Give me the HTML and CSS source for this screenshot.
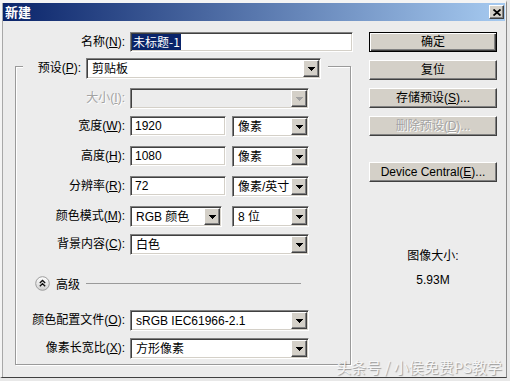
FILE: index.html
```html
<!DOCTYPE html>
<html lang="zh-CN">
  <head>
    <meta charset="UTF-8" />
    <title>新建</title>
    <link rel="stylesheet" href="styles.css">
  </head>
  <body>
    <div class="window">
      <div class="titlebar">
        <span class="title">新建</span>
        <span class="close">
          <svg width="8" height="7" viewBox="0 0 8 7"><path d="M0.5 0.5L7.5 6.5M7.5 0.5L0.5 6.5" stroke="#000" stroke-width="1.8"/></svg>
        </span>
      </div>

      <div class="content">
        <div class="form">
          <div class="row name-row">
            <span class="label">名称(<u>N</u>):</span>
            <div class="field w-name"><span class="sel">未标题-1</span></div>
          </div>

          <div class="group">
            <div class="row group-head">
              <span class="label">预设(<u>P</u>):</span>
              <div class="select w-preset"><span class="val">剪贴板</span><span class="arrow"><svg width="7" height="4" viewBox="0 0 7 4"><path d="M0 0h7v1h-1v1h-1v1h-1v1h-1v-1h-1v-1h-1v-1h-1z"/></svg></span></div>
            </div>

            <div class="row">
              <span class="label disabled">大小(<u>I</u>):</span>
              <div class="select w-full off"><span class="val"></span><span class="arrow"><svg width="7" height="4" viewBox="0 0 7 4"><path d="M0 0h7v1h-1v1h-1v1h-1v1h-1v-1h-1v-1h-1v-1h-1z"/></svg></span></div>
            </div>

            <div class="row tight">
              <span class="label">宽度(<u>W</u>):</span>
              <div class="field w-num">1920</div>
              <div class="select w-unit"><span class="val">像素</span><span class="arrow"><svg width="7" height="4" viewBox="0 0 7 4"><path d="M0 0h7v1h-1v1h-1v1h-1v1h-1v-1h-1v-1h-1v-1h-1z"/></svg></span></div>
            </div>

            <div class="row">
              <span class="label">高度(<u>H</u>):</span>
              <div class="field w-num">1080</div>
              <div class="select w-unit"><span class="val">像素</span><span class="arrow"><svg width="7" height="4" viewBox="0 0 7 4"><path d="M0 0h7v1h-1v1h-1v1h-1v1h-1v-1h-1v-1h-1v-1h-1z"/></svg></span></div>
            </div>

            <div class="row">
              <span class="label">分辨率(<u>R</u>):</span>
              <div class="field w-num">72</div>
              <div class="select w-unit"><span class="val">像素/英寸</span><span class="arrow"><svg width="7" height="4" viewBox="0 0 7 4"><path d="M0 0h7v1h-1v1h-1v1h-1v1h-1v-1h-1v-1h-1v-1h-1z"/></svg></span></div>
            </div>

            <div class="row">
              <span class="label">颜色模式(<u>M</u>):</span>
              <div class="select w-mode"><span class="val">RGB 颜色</span><span class="arrow"><svg width="7" height="4" viewBox="0 0 7 4"><path d="M0 0h7v1h-1v1h-1v1h-1v1h-1v-1h-1v-1h-1v-1h-1z"/></svg></span></div>
              <div class="select w-unit"><span class="val">8 位</span><span class="arrow"><svg width="7" height="4" viewBox="0 0 7 4"><path d="M0 0h7v1h-1v1h-1v1h-1v1h-1v-1h-1v-1h-1v-1h-1z"/></svg></span></div>
            </div>

            <div class="row tight">
              <span class="label">背景内容(<u>C</u>):</span>
              <div class="select w-full"><span class="val">白色</span><span class="arrow"><svg width="7" height="4" viewBox="0 0 7 4"><path d="M0 0h7v1h-1v1h-1v1h-1v1h-1v-1h-1v-1h-1v-1h-1z"/></svg></span></div>
            </div>

            <div class="advanced">
              <svg class="adv-icon" width="15" height="15" viewBox="0 0 15 15">
                <defs>
                  <linearGradient id="knob" x1="0" y1="0" x2="0" y2="1">
                    <stop offset="0" stop-color="#ffffff"/>
                    <stop offset="1" stop-color="#cfcfcf"/>
                  </linearGradient>
                </defs>
                <circle cx="7.5" cy="7.5" r="6.8" fill="url(#knob)" stroke="#9c9c9c"/>
                <path d="M4.8 7L7.5 4.5L10.2 7M4.8 10.2L7.5 7.7L10.2 10.2" fill="none" stroke="#111" stroke-width="1.3"/>
              </svg>
              <span class="adv-text">高级</span>
              <span class="adv-line"></span>
            </div>

            <div class="row after-adv">
              <span class="label">颜色配置文件(<u>O</u>):</span>
              <div class="select w-full"><span class="val">sRGB IEC61966-2.1</span><span class="arrow"><svg width="7" height="4" viewBox="0 0 7 4"><path d="M0 0h7v1h-1v1h-1v1h-1v1h-1v-1h-1v-1h-1v-1h-1z"/></svg></span></div>
            </div>

            <div class="row tight">
              <span class="label">像素长宽比(<u>X</u>):</span>
              <div class="select w-full"><span class="val">方形像素</span><span class="arrow"><svg width="7" height="4" viewBox="0 0 7 4"><path d="M0 0h7v1h-1v1h-1v1h-1v1h-1v-1h-1v-1h-1v-1h-1z"/></svg></span></div>
            </div>
          </div>
        </div>

        <div class="side">
          <div class="btn default">确定</div>
          <div class="btn">复位</div>
          <div class="btn">存储预设(<u>S</u>)...</div>
          <div class="btn off">删除预设(<u>D</u>)...</div>
          <div class="btn device">Device Central(<u>E</u>)...</div>
          <div class="size-title">图像大小:</div>
          <div class="size-value">5.93M</div>
        </div>
      </div>

      <div class="watermark">头条号 / 小侯免费PS教学</div>
    </div>
  </body>
</html>
```

FILE: styles.css
```css
* {
  box-sizing: border-box;
}
body {
  margin: 0;
  background: #e8e8e8;
  font-family: "Liberation Sans", "Noto Sans CJK SC", sans-serif;
  font-size: 12px;
  color: #000;
}
.window {
  position: relative;
  width: 507px;
  height: 378px;
  background: #ececec;
  border-top: 3px solid #f4f4f4;
  border-left: 2px solid #f4f4f4;
  border-right: 1px solid #8a8a8a;
  border-bottom: 1px solid #404040;
  box-shadow: inset 1px 0 0 #a8a8a8;
}
.titlebar {
  height: 18px;
  margin: 0 1px;
  padding: 0 1px 0 2px;
  background: linear-gradient(to right, #0a246a, #a6caf0);
  display: flex;
  align-items: center;
  justify-content: space-between;
}
.title {
  color: #fff;
  font-weight: bold;
  font-size: 13px;
  line-height: 18px;
  font-family: "Noto Sans CJK SC", sans-serif;
}
.close {
  width: 15px;
  height: 14px;
  background: #d4d0c8;
  border: 1px solid;
  border-color: #fff #404040 #404040 #fff;
  box-shadow: inset -1px -1px 0 #808080;
  display: flex;
  align-items: center;
  justify-content: center;
}
.content {
  display: flex;
}
.form {
  width: 356px;
  padding-top: 11px;
}
.row {
  display: flex;
  align-items: flex-start;
  height: 21px;
}
.label {
  width: 114px;
  padding-right: 5px;
  text-align: right;
  white-space: nowrap;
  line-height: 20px;
}
.label.disabled {
  color: #a3a3a3;
  text-shadow: 1px 1px 0 #fff;
}
.name-row {
  height: 20px;
}
.name-row .label {
  width: 128px;
}

/* sunken text field */
.field {
  height: 20px;
  background: #fff;
  border: 1px solid;
  border-color: #808080 #fff #fff #808080;
  box-shadow: inset 1px 1px 0 #404040, inset -1px -1px 0 #d4d0c8;
  padding: 1px 0 0 4px;
  line-height: 16px;
  white-space: nowrap;
}
.sel {
  display: inline-block;
  background: #0a246a;
  color: #fff;
  line-height: 16px;
  padding: 0 1px;
  font-family: "Noto Sans CJK SC", sans-serif;
}
.name-row .field {
  padding-left: 1px;
}
.w-name {
  width: 223px;
}
.w-num {
  width: 96px;
  margin-right: 6px;
}

/* drop-down */
.select {
  height: 21px;
  display: flex;
  background: #fff;
  border: 1px solid;
  border-color: #808080 #fff #fff #808080;
  box-shadow: inset 1px 1px 0 #404040, inset -1px -1px 0 #d4d0c8;
  padding: 1px;
}
.select .val {
  flex: 1;
  padding-left: 4px;
  line-height: 19px;
  white-space: nowrap;
  overflow: hidden;
}
.select .arrow {
  width: 16px;
  height: 17px;
  background: #d4d0c8;
  border: 1px solid;
  border-color: #fff #404040 #404040 #fff;
  box-shadow: inset -1px -1px 0 #808080;
  display: flex;
  align-items: center;
  justify-content: center;
}
.select.off {
  background: #ececec;
}
.select.off .arrow svg {
  fill: #a0a0a0;
}
.w-preset {
  width: 235px;
}
.w-full {
  width: 179px;
}
.w-unit {
  width: 77px;
}
.w-mode {
  width: 92px;
  margin-right: 10px;
}

/* group box */
.group {
  margin: 14px 0 0 13px;
  width: 336px;
  border: 1px solid #9a9a9a;
  box-shadow: 1px 1px 0 #fff, inset 1px 1px 0 #fff;
  padding-bottom: 5px;
}
.group-head {
  margin: -9px 0 0 7px;
  width: 305px;
  background: #ececec;
}
.group-head .label {
  width: 63px;
}
.row + .row {
  margin-top: 9px;
}
.row.tight {
  margin-top: 7px;
}
.advanced {
  display: flex;
  align-items: center;
  height: 15px;
  margin-top: 21px;
  padding-left: 19px;
}
.adv-icon {
  flex: none;
}
.adv-text {
  margin-left: 6px;
  width: 30px;
  font-family: "Noto Sans CJK SC", sans-serif;
}
.adv-line {
  flex: 1;
  height: 1px;
  background: #9a9a9a;
  margin-right: 49px;
}
.row.after-adv {
  margin-top: 19px;
}

/* buttons */
.side {
  width: 128px;
  margin-left: 11px;
  padding-top: 11px;
  display: flex;
  flex-direction: column;
  align-items: center;
}
.btn {
  width: 128px;
  height: 20px;
  margin-bottom: 8px;
  background: #d4d0c8;
  border: 1px solid;
  border-color: #fff #404040 #404040 #fff;
  box-shadow: inset -1px -1px 0 #808080;
  text-align: center;
  line-height: 18px;
}
.btn.default {
  border-color: #000;
  box-shadow: inset 1px 1px 0 #fff, inset -1px -1px 0 #404040, inset -2px -2px 0 #808080;
}
.btn.off {
  color: #a3a3a3;
  text-shadow: 1px 1px 0 #fff;
}
.btn.device {
  margin-top: 18px;
}
.size-title {
  margin-top: 59px;
  line-height: 14px;
}
.size-value {
  margin-top: 10px;
  line-height: 14px;
}
.watermark {
  position: absolute;
  right: 4px;
  bottom: 1px;
  font-size: 15px;
  line-height: 18px;
  font-family: "Noto Sans CJK SC", sans-serif;
  color: #f6f6f6;
  text-shadow: 1px 1px 1px rgba(0, 0, 0, 0.35);
}
```
